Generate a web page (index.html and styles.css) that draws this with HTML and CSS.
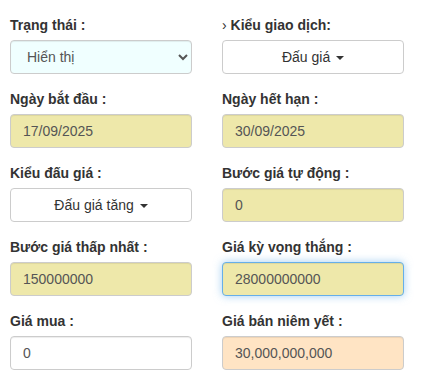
FILE: index.html
```html
<!DOCTYPE html>
<html lang="vi">
<head>
    <meta charset="UTF-8">
    <meta name="viewport" content="width=device-width, initial-scale=1.0">
    <title>Thông tin đấu giá</title>
    <link rel="stylesheet" href="styles.css">
</head>
<body>
    <div class="auction-form">
        <div class="form-group">
            <label for="status">Trạng thái :</label>
            <select id="status" class="form-control bg-azure">
                <option>Hiển thị</option>
                <option>Ẩn</option>
            </select>
        </div>
        <div class="form-group">
            <label><span class="chevron">›</span> Kiểu giao dịch:</label>
            <button type="button" class="btn-dropdown">Đấu giá <span class="caret"></span></button>
        </div>

        <div class="form-group">
            <label for="start-date">Ngày bắt đầu :</label>
            <input type="text" id="start-date" class="form-control bg-gold" value="17/09/2025">
        </div>
        <div class="form-group">
            <label for="end-date">Ngày hết hạn :</label>
            <input type="text" id="end-date" class="form-control bg-gold" value="30/09/2025">
        </div>

        <div class="form-group">
            <label>Kiểu đấu giá :</label>
            <button type="button" class="btn-dropdown">Đấu giá tăng <span class="caret"></span></button>
        </div>
        <div class="form-group">
            <label for="auto-step">Bước giá tự động :</label>
            <input type="text" id="auto-step" class="form-control bg-gold" value="0">
        </div>

        <div class="form-group">
            <label for="min-step">Bước giá thấp nhất :</label>
            <input type="text" id="min-step" class="form-control bg-gold" value="150000000">
        </div>
        <div class="form-group">
            <label for="expected">Giá kỳ vọng thắng :</label>
            <input type="text" id="expected" class="form-control bg-gold is-focus" value="28000000000">
        </div>

        <div class="form-group">
            <label for="buy-price">Giá mua :</label>
            <input type="text" id="buy-price" class="form-control" value="0">
        </div>
        <div class="form-group">
            <label for="list-price">Giá bán niêm yết :</label>
            <input type="text" id="list-price" class="form-control bg-bisque" value="30,000,000,000">
        </div>
    </div>

    <script>
        const expected = document.getElementById('expected');
        expected.focus();
        expected.setSelectionRange(expected.value.length, expected.value.length);
    </script>
</body>
</html>
```

FILE: styles.css
```css
body {
    margin: 0;
    font-family: "Liberation Sans", Arial, sans-serif;
    font-size: 14px;
    line-height: 20px;
    color: #333;
    background-color: #fff;
}
.auction-form {
    display: grid;
    grid-template-columns: 182px 182px;
    column-gap: 30px;
    padding: 15px 10px 0;
}
.form-group {
    margin-bottom: 15px;
}
.form-group:nth-last-child(-n+2) {
    margin-bottom: 0;
}
label {
    display: inline-block;
    margin-bottom: 5px;
    font-weight: bold;
}
.chevron {
    font-weight: normal;
}
.form-control {
    display: block;
    width: 100%;
    height: 34px;
    padding: 6px 12px;
    font-family: inherit;
    font-size: 14px;
    line-height: 20px;
    color: #555;
    background-color: #fff;
    border: 1px solid #ccc;
    border-radius: 4px;
    box-shadow: inset 0 1px 1px rgba(0,0,0,0.075);
    box-sizing: border-box;
    outline: none;
    caret-color: #333;
}
.form-control.is-focus,
.form-control:focus {
    border-color: #66afe9;
    box-shadow: inset 0 1px 1px rgba(0,0,0,0.075), 0 0 8px rgba(102,175,233,0.6);
}
.bg-azure {
    background-color: #f0ffff;
}
.bg-gold {
    background-color: #eee8aa;
}
.bg-bisque {
    background-color: #ffe4c4;
}
.btn-dropdown {
    display: block;
    width: 100%;
    height: 34px;
    padding: 6px 12px;
    font-family: inherit;
    font-size: 14px;
    line-height: 20px;
    color: #333;
    background-color: #fff;
    border: 1px solid #ccc;
    border-radius: 4px;
    cursor: pointer;
}
.caret {
    display: inline-block;
    width: 0;
    height: 0;
    margin-left: 2px;
    vertical-align: middle;
    border-top: 4px solid;
    border-right: 4px solid transparent;
    border-left: 4px solid transparent;
}
```
